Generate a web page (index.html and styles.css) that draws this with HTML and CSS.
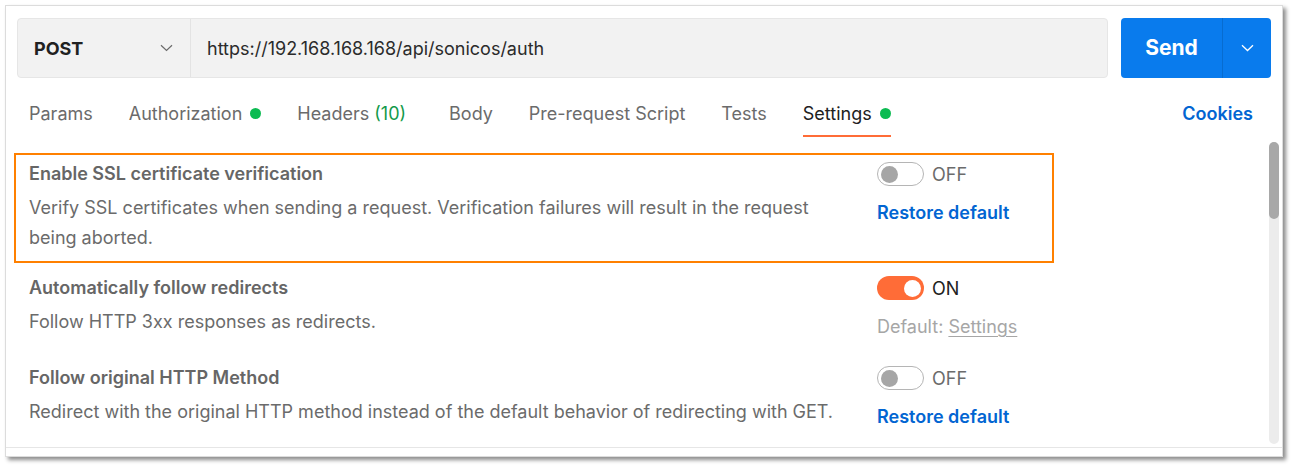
FILE: index.html
```html
<!DOCTYPE html>
<html>
<head>
<meta charset="utf-8">
<link rel="stylesheet" href="styles.css">
</head>
<body>
<div class="window">
  <div class="reqbar">
    <div class="urlbox">
      <div class="method">
        <span class="method-name">POST</span>
        <svg class="chev" width="13" height="8" viewBox="0 0 13 8"><path d="M1 1.2 L6.5 6.5 L12 1.2" fill="none" stroke="#6b6b6b" stroke-width="1.2"/></svg>
      </div>
      <div class="url">https://192.168.168.168/api/sonicos/auth</div>
    </div>
    <div class="send">
      <span class="send-label">Send</span>
      <span class="send-more"><svg width="13" height="8" viewBox="0 0 13 8"><path d="M1 1.2 L6.5 6.5 L12 1.2" fill="none" stroke="#ffffff" stroke-width="1.3"/></svg></span>
    </div>
  </div>

  <div class="tabs">
    <div class="tab">Params</div>
    <div class="tab">Authorization <span class="dot"></span></div>
    <div class="tab tab-headers">Headers <span class="count">(10)</span></div>
    <div class="tab">Body</div>
    <div class="tab">Pre-request Script</div>
    <div class="tab">Tests</div>
    <div class="tab active">Settings <span class="dot"></span></div>
    <div class="spacer"></div>
    <div class="cookies">Cookies</div>
  </div>

  <div class="settings-area">
    <div class="settings">
      <div class="row highlight">
        <div class="info">
          <div class="title">Enable SSL certificate verification</div>
          <div class="desc">Verify SSL certificates when sending a request. Verification failures will result in the request being aborted.</div>
        </div>
        <div class="control">
          <div class="switch-line"><span class="switch off"><span class="knob"></span></span><span class="state">OFF</span></div>
          <div class="link">Restore default</div>
        </div>
      </div>
      <div class="row">
        <div class="info">
          <div class="title">Automatically follow redirects</div>
          <div class="desc">Follow HTTP 3xx responses as redirects.</div>
        </div>
        <div class="control">
          <div class="switch-line"><span class="switch on"><span class="knob"></span></span><span class="state state-on">ON</span></div>
          <div class="default">Default: <span class="u">Settings</span></div>
        </div>
      </div>
      <div class="row">
        <div class="info">
          <div class="title">Follow original HTTP Method</div>
          <div class="desc">Redirect with the original HTTP method instead of the default behavior of redirecting with GET.</div>
        </div>
        <div class="control">
          <div class="switch-line"><span class="switch off"><span class="knob"></span></span><span class="state">OFF</span></div>
          <div class="link">Restore default</div>
        </div>
      </div>
    </div>
    <div class="scrollbar"><div class="thumb"></div></div>
  </div>
  <div class="statusline"></div>
</div>
</body>
</html>
```

FILE: styles.css
```css
* { box-sizing: border-box; }
html, body { margin: 0; padding: 0; background: #ffffff; }
body {
  font-family: Inter, "Noto Sans", sans-serif;
  font-size: 18px;
  color: #6b6b6b;
  width: 1291px;
  height: 466px;
  overflow: hidden;
}
.window {
  margin: 5px 0 0 5px;
  width: 1278px;
  height: 452px;
  border: 1px solid #dcdcdc;
  background: #fff;
  box-shadow: 3px 3px 4px rgba(0, 0, 0, 0.45);
  display: flex;
  flex-direction: column;
}
.reqbar {
  display: flex;
  height: 60px;
  margin: 12px 0 0 11px;
  gap: 13px;
}
.urlbox {
  width: 1091px;
  display: flex;
  background: #f2f2f2;
  border: 1px solid #e6e6e6;
  border-radius: 4px;
}
.method {
  width: 173px;
  border-right: 1px solid #e3e3e3;
  display: flex;
  align-items: center;
  justify-content: space-between;
  padding: 0 17px 0 16px;
}
.method-name { font-weight: 700; color: #212121; }
.chev { display: block; }
.url {
  display: flex;
  align-items: center;
  padding-left: 16px;
  color: #2b2b2b;
}
.send {
  width: 150px;
  background: #097bed;
  border-radius: 4px;
  display: flex;
  color: #fff;
}
.send-label {
  width: 102px;
  border-right: 1px solid rgba(0, 0, 0, 0.12);
  display: flex;
  align-items: center;
  justify-content: center;
  font-size: 21px;
  font-weight: 700;
  padding-bottom: 1px;
}
.send-more {
  flex: 1;
  display: flex;
  align-items: center;
  justify-content: center;
}
.send-more svg { display: block; }
.tabs {
  display: flex;
  align-items: center;
  height: 45px;
  margin-top: 14px;
  padding: 0 29px 0 23px;
  gap: 36px;
}
.tab {
  display: flex;
  align-items: center;
  gap: 8px;
  height: 45px;
  border-bottom: 2px solid transparent;
  padding-bottom: 1px;
  white-space: nowrap;
}
.tab-headers { gap: 5px; margin-right: 7px; }
.tab.active { color: #212121; border-bottom-color: #ff6c37; }
.dot {
  width: 11px;
  height: 11px;
  border-radius: 50%;
  background: #0cbb52;
  display: inline-block;
}
.count { color: #139a4b; }
.spacer { flex: 1; }
.cookies {
  color: #0265d2;
  font-weight: 600;
  padding-bottom: 3px;
}
.settings-area {
  flex: 1;
  display: flex;
  margin-top: 5px;
  min-height: 0;
}
.settings {
  flex: 1;
  padding: 9px 0 0 6px;
}
.row {
  width: 1044px;
  display: flex;
  gap: 32px;
  padding: 11px 0 12px 17px;
}
.highlight {
  outline: 2px solid #ff8000;
  outline-offset: -4px;
}
.info { width: 816px; }
.title {
  font-weight: 600;
  line-height: 24px;
  color: #666666;
}
.desc {
  margin-top: 7px;
  line-height: 30px;
}
.control { flex: 1; }
.switch-line {
  display: flex;
  align-items: center;
  gap: 8px;
  height: 24px;
  margin-top: 0;
}
.switch {
  width: 47px;
  height: 24px;
  border-radius: 12px;
  display: flex;
  align-items: center;
  padding: 0 3px;
}
.switch.off { border: 1px solid #b5b5b5; background: #fff; justify-content: flex-start; }
.switch.on { background: #ff6c37; justify-content: flex-end; }
.knob {
  width: 17px;
  height: 17px;
  border-radius: 50%;
  background: #a6a6a6;
}
.switch.on .knob { background: #fff; }
.state { color: #6b6b6b; }
.state-on { color: #212121; }
.link {
  margin-top: 11px;
  line-height: 32px;
  color: #0265d2;
  font-weight: 600;
}
.default {
  margin-top: 11px;
  line-height: 32px;
  color: #a6a6a6;
}
.u { text-decoration: underline; text-underline-offset: 3px; }
.scrollbar {
  width: 10px;
  margin: 0 3px 3px 0;
  background: #ececec;
  border-radius: 5px;
}
.thumb {
  height: 77px;
  background: #a8a8a8;
  border-radius: 5px;
}
.statusline {
  height: 9px;
  border-top: 1px solid #e6e6e6;
}
```
